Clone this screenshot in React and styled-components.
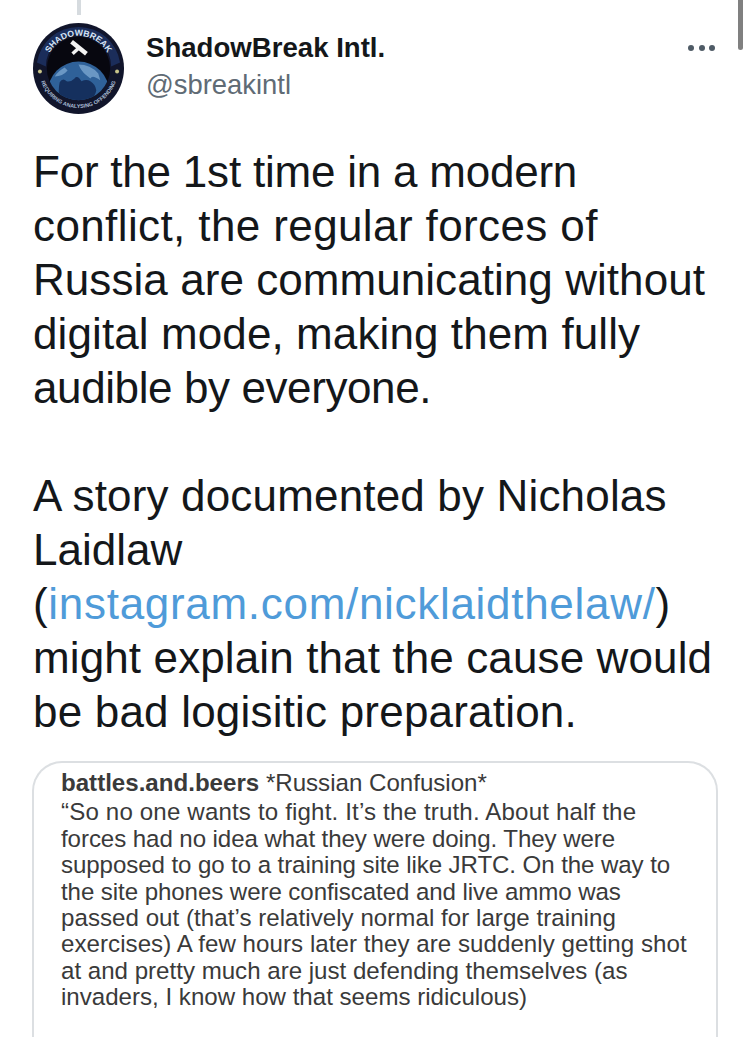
import React from 'react';
import styled, { createGlobalStyle } from 'styled-components';

const GlobalStyle = createGlobalStyle`
  html, body {
    margin: 0;
    padding: 0;
    background: #fff;
  }
  body {
    font-family: "Liberation Sans", Arial, sans-serif;
  }
`;

const Page = styled.div`
  position: relative;
  width: 750px;
  height: 1037px;
  overflow: hidden;
  background: #fff;
  box-sizing: border-box;
  padding: 0 32px 0 33px;
`;

const ScrollThumb = styled.div`
  position: absolute;
  top: 0;
  right: 7px;
  width: 5px;
  height: 50px;
  background: #808080;
  border-radius: 0 0 3px 3px;
`;

const Header = styled.header`
  display: flex;
  align-items: flex-start;
  height: 118px;
`;

const AvatarColumn = styled.div`
  display: flex;
  flex-direction: column;
  align-items: center;
  width: 91px;
  margin-right: 22px;
`;

const ThreadLine = styled.div`
  width: 4px;
  height: 15px;
  background: #d6dbdf;
  margin-bottom: 8px;
`;

const AuthorInfo = styled.div`
  flex: 1;
  padding-top: 33px;
`;

const Name = styled.div`
  font-size: 27.6px;
  line-height: 30px;
  font-weight: 700;
  color: #14171a;
`;

const Handle = styled.div`
  font-size: 27.4px;
  line-height: 30px;
  margin-top: 7px;
  color: #606b75;
`;

const MoreDots = styled.div`
  display: flex;
  gap: 4.5px;
  margin: 45px 3px 0 0;
`;

const Dot = styled.span`
  width: 6px;
  height: 6px;
  border-radius: 50%;
  background: #4f5b66;
`;

const TweetText = styled.div`
  margin-top: 27px;
  font-size: 44px;
  line-height: 54px;
  color: #14171a;
  white-space: nowrap;
`;

const TweetLine = styled.div`
  min-height: 54px;
  letter-spacing: ${(props) => props.$track || 0}px;
`;

const Link = styled.span`
  color: #4f9bd9;
`;

const QuoteCard = styled.div`
  margin-top: 22px;
  width: 686px;
  height: 320px;
  box-sizing: border-box;
  margin-left: -1px;
  padding: 7px 20px 0 27px;
  border: 2px solid #dcdfe2;
  border-bottom: 0;
  border-radius: 30px 30px 0 0;
  font-size: 24.1px;
  line-height: 26.4px;
  color: #3a3a3a;
  white-space: nowrap;
`;

const QuoteTitle = styled.div`
  margin-bottom: 3px;
`;

const QuoteAuthor = styled.span`
  font-weight: 700;
`;

const QuoteLine = styled.div`
  letter-spacing: ${(props) => props.$track || 0}px;
`;

const Avatar = () => (
  <svg width="91" height="91" viewBox="0 0 92 92">
    <defs>
      <path id="topArc" d="M13 46 A33 33 0 0 1 79 46" />
      <path id="bottomArc" d="M6 46 A40 40 0 0 0 86 46" />
      <clipPath id="badge">
        <circle cx="46" cy="46" r="32" />
      </clipPath>
    </defs>
    <circle cx="46" cy="46" r="46" fill="#11152b" />
    <path d="M4 40 A42.500 42.500 0 0 1 88 40 L79 44 A33 33 0 0 0 13 44 Z" fill="#1b2d5a" />
    <circle cx="46" cy="46" r="32" fill="#07070f" />
    <g clipPath="url(#badge)">
      <circle cx="46" cy="70" r="31" fill="#2f6199" />
      <path d="M27 60 q3 -5 7 -1 q4 1 8 -3 q2 -3 5 0 l2 3 q5 -3 9 0 q5 3 6 9 q-1 8 -10 12 l-22 0 q-6 -5 -6 -11 q0 -5 1 -9z" fill="#15305e" />
      <path d="M46 42 q12 0 20 9 l2 7 q-8 -6 -10 -2 l-5 -4 q-4 -3 -7 -10z M22 54 q4 -6 10 -9 l3 3 q-5 6 -13 6z" fill="#6a97c4" />
    </g>
    <g stroke="#f3f3f3" fill="none">
      <path d="M39 19 L54 31" strokeWidth="4.500" />
      <path d="M40 31 L46 25.500" strokeWidth="3.500" />
    </g>
    <circle cx="7" cy="49" r="2" fill="#c9c58a" />
    <circle cx="85" cy="49" r="2" fill="#c9c58a" />
    <text fontFamily="Liberation Sans, sans-serif" fontSize="8.800" fontWeight="700" fill="#d6e4f5" textAnchor="middle">
      <textPath href="#topArc" startOffset="50%">SHADOWBREAK</textPath>
    </text>
    <text fontFamily="Liberation Sans, sans-serif" fontSize="5.500" fontWeight="700" fill="#a9bcd4" textAnchor="middle">
      <textPath href="#bottomArc" startOffset="50%">REQUIRING ANALYSING OFFENDING</textPath>
    </text>
  </svg>
);

export default function App() {
  return (
    <>
      <GlobalStyle />
      <Page>
        <ScrollThumb />
        <Header>
          <AvatarColumn>
            <ThreadLine />
            <Avatar />
          </AvatarColumn>
          <AuthorInfo>
            <Name>ShadowBreak Intl.</Name>
            <Handle>@sbreakintl</Handle>
          </AuthorInfo>
          <MoreDots>
            <Dot />
            <Dot />
            <Dot />
          </MoreDots>
        </Header>
        <TweetText>
          <TweetLine $track={-0.22}>For the 1st time in a modern</TweetLine>
          <TweetLine $track={0.39}>conflict, the regular forces of</TweetLine>
          <TweetLine $track={0.06}>Russia are communicating without</TweetLine>
          <TweetLine $track={0.1}>digital mode, making them fully</TweetLine>
          <TweetLine $track={-0.4}>audible by everyone.</TweetLine>
          <TweetLine />
          <TweetLine $track={0.17}>A story documented by Nicholas</TweetLine>
          <TweetLine>Laidlaw</TweetLine>
          <TweetLine $track={0.7}>
            (<Link>instagram.com/nicklaidthelaw/</Link>)
          </TweetLine>
          <TweetLine $track={0.12}>might explain that the cause would</TweetLine>
          <TweetLine $track={0.2}>be bad logisitic preparation.</TweetLine>
        </TweetText>
        <QuoteCard>
          <QuoteTitle>
            <QuoteAuthor>battles.and.beers</QuoteAuthor> *Russian Confusion*
          </QuoteTitle>
          <QuoteLine $track={0.16}>“So no one wants to fight. It’s the truth. About half the</QuoteLine>
          <QuoteLine $track={-0.08}>forces had no idea what they were doing. They were</QuoteLine>
          <QuoteLine $track={-0.09}>supposed to go to a training site like JRTC. On the way to</QuoteLine>
          <QuoteLine $track={-0.08}>the site phones were confiscated and live ammo was</QuoteLine>
          <QuoteLine $track={0.04}>passed out (that’s relatively normal for large training</QuoteLine>
          <QuoteLine $track={0.05}>exercises) A few hours later they are suddenly getting shot</QuoteLine>
          <QuoteLine>at and pretty much are just defending themselves (as</QuoteLine>
          <QuoteLine>invaders, I know how that seems ridiculous)</QuoteLine>
        </QuoteCard>
      </Page>
    </>
  );
}
